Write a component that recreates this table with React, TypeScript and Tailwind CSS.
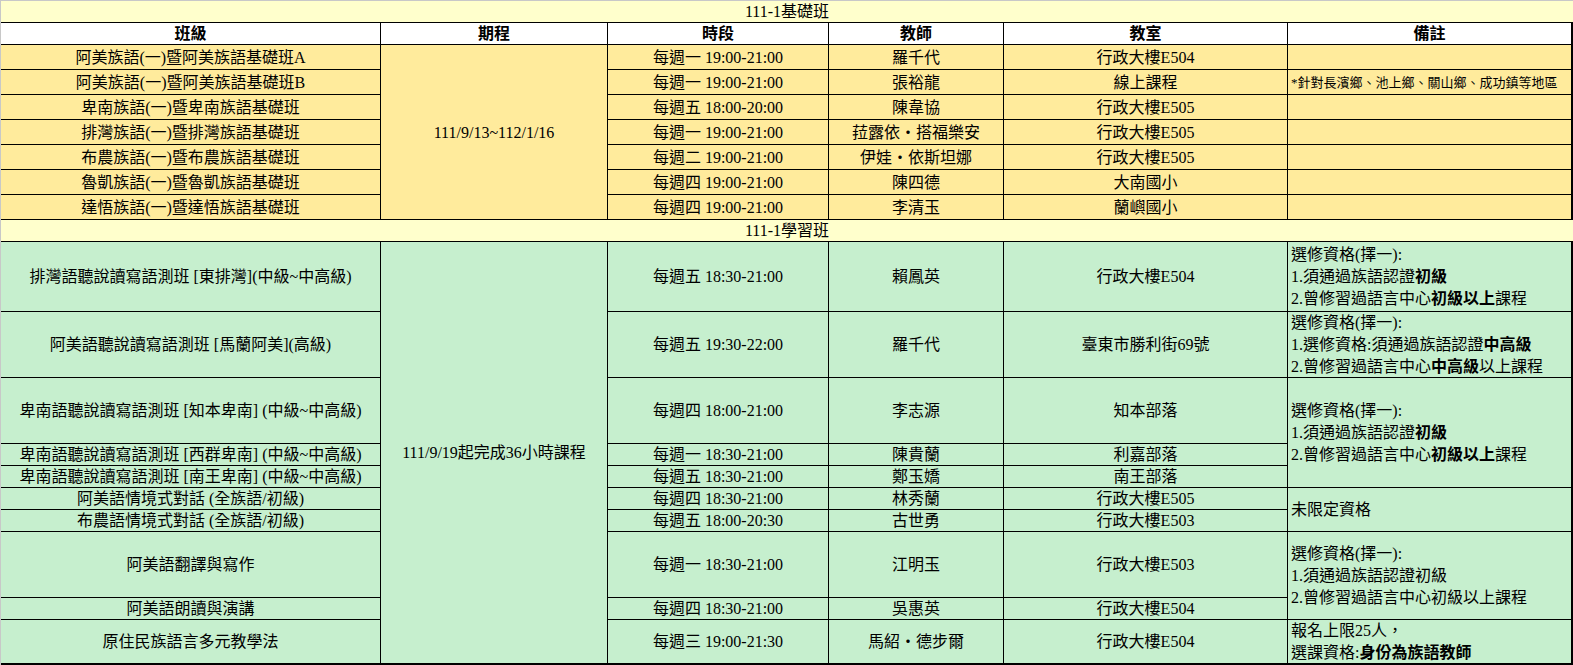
import type { ReactNode } from "react";
import { twMerge } from "tailwind-merge";

// Excel-like fills
const TITLE = "bg-[#ffffcc]";
const YELLOW = "bg-[#ffeb9c]";
const GREEN = "bg-[#c6efce]";

type Note = ReactNode[] | null;

const basicRows = [
  { name: "阿美族語(一)暨阿美族語基礎班A", time: "每週一 19:00-21:00", teacher: "羅千代", room: "行政大樓E504", note: "" },
  { name: "阿美族語(一)暨阿美族語基礎班B", time: "每週一 19:00-21:00", teacher: "張裕龍", room: "線上課程", note: "*針對長濱鄉、池上鄉、關山鄉、成功鎮等地區" },
  { name: "卑南族語(一)暨卑南族語基礎班", time: "每週五 18:00-20:00", teacher: "陳韋協", room: "行政大樓E505", note: "" },
  { name: "排灣族語(一)暨排灣族語基礎班", time: "每週一 19:00-21:00", teacher: "菈露依‧搭福樂安", room: "行政大樓E505", note: "" },
  { name: "布農族語(一)暨布農族語基礎班", time: "每週二 19:00-21:00", teacher: "伊娃‧依斯坦娜", room: "行政大樓E505", note: "" },
  { name: "魯凱族語(一)暨魯凱族語基礎班", time: "每週四 19:00-21:00", teacher: "陳四德", room: "大南國小", note: "" },
  { name: "達悟族語(一)暨達悟族語基礎班", time: "每週四 19:00-21:00", teacher: "李清玉", room: "蘭嶼國小", note: "" },
];

const chooseOne = "選修資格(擇一):";

// span = how many rows the remark cell covers (0 = covered by the one above)
const studyRows: { name: string; time: string; teacher: string; room: string; span: number; note: Note }[] = [
  {
    name: "排灣語聽說讀寫語測班 [東排灣](中級~中高級)", time: "每週五 18:30-21:00", teacher: "賴鳳英", room: "行政大樓E504", span: 1,
    note: [chooseOne, <>1.須通過族語認證<b>初級</b></>, <>2.曾修習過語言中心<b>初級以上</b>課程</>],
  },
  {
    name: "阿美語聽說讀寫語測班 [馬蘭阿美](高級)", time: "每週五 19:30-22:00", teacher: "羅千代", room: "臺東市勝利街69號", span: 1,
    note: [chooseOne, <>1.選修資格:須通過族語認證<b>中高級</b></>, <>2.曾修習過語言中心<b>中高級</b>以上課程</>],
  },
  {
    name: "卑南語聽說讀寫語測班 [知本卑南] (中級~中高級)", time: "每週四 18:00-21:00", teacher: "李志源", room: "知本部落", span: 3,
    note: [chooseOne, <>1.須通過族語認證<b>初級</b></>, <>2.曾修習過語言中心<b>初級以上</b>課程</>],
  },
  { name: "卑南語聽說讀寫語測班 [西群卑南] (中級~中高級)", time: "每週一 18:30-21:00", teacher: "陳貴蘭", room: "利嘉部落", span: 0, note: null },
  { name: "卑南語聽說讀寫語測班 [南王卑南] (中級~中高級)", time: "每週五 18:30-21:00", teacher: "鄭玉嬌", room: "南王部落", span: 0, note: null },
  { name: "阿美語情境式對話 (全族語/初級)", time: "每週四 18:30-21:00", teacher: "林秀蘭", room: "行政大樓E505", span: 2, note: ["未限定資格"] },
  { name: "布農語情境式對話 (全族語/初級)", time: "每週五 18:00-20:30", teacher: "古世勇", room: "行政大樓E503", span: 0, note: null },
  {
    name: "阿美語翻譯與寫作", time: "每週一 18:30-21:00", teacher: "江明玉", room: "行政大樓E503", span: 2,
    note: [chooseOne, "1.須通過族語認證初級", "2.曾修習過語言中心初級以上課程"],
  },
  { name: "阿美語朗讀與演講", time: "每週四 18:30-21:00", teacher: "吳惠英", room: "行政大樓E504", span: 0, note: null },
  {
    name: "原住民族語言多元教學法", time: "每週三 19:00-21:30", teacher: "馬紹‧德步爾", room: "行政大樓E504", span: 1,
    note: ["報名上限25人，", <>選課資格:<b>身份為族語教師</b></>],
  },
];

const spanClass: Record<number, string> = { 1: "", 2: "row-span-2", 3: "row-span-3" };

function Cell({ children, className }: { children?: ReactNode; className?: string }) {
  return (
    <div
      className={twMerge(
        "flex items-center justify-center border-r border-b border-black text-center whitespace-nowrap leading-none pt-px",
        className
      )}
    >
      {children}
    </div>
  );
}

export default function App() {
  const last = studyRows.length - 1;
  return (
    <div className="w-[1573px] h-[665px] overflow-hidden bg-white border-t border-l border-[#c8c8c8] font-['Liberation_Serif','Noto_Sans_CJK_TC',serif] text-[16px] text-black">
      <div className="grid grid-cols-[380px_227px_221px_175px_284px_1fr] grid-rows-[22px_22px_repeat(7,25px)_22px_70px_66px_66px_22px_22px_22px_22px_66px_22px_45px]">
        {/* 基礎班 */}
        <div className={twMerge("col-span-6 flex items-center justify-center border-b border-black", TITLE)}>111-1基礎班</div>
        {["班級", "期程", "時段", "教師", "教室", "備註"].map((h, i) => (
          <Cell key={h} className={twMerge("bg-white font-bold", i === 5 && "border-r-2")}>
            {h}
          </Cell>
        ))}
        {basicRows.map((r, i) => (
          <div key={r.name} className="contents">
            <Cell className={YELLOW}>{r.name}</Cell>
            {i === 0 && <Cell className={twMerge("row-span-7", YELLOW)}>111/9/13~112/1/16</Cell>}
            <Cell className={YELLOW}>{r.time}</Cell>
            <Cell className={YELLOW}>{r.teacher}</Cell>
            <Cell className={YELLOW}>{r.room}</Cell>
            <Cell className={twMerge("justify-start pl-[3px] text-[13px] border-r-2", YELLOW)}>{r.note}</Cell>
          </div>
        ))}

        {/* 學習班 */}
        <div className={twMerge("col-span-6 flex items-center justify-center border-b border-black", TITLE)}>111-1學習班</div>
        {studyRows.map((r, i) => {
          const bottom = i === last ? "border-b-2" : "";
          return (
            <div key={r.name} className="contents">
              <Cell className={twMerge(GREEN, bottom)}>{r.name}</Cell>
              {i === 0 && <Cell className={twMerge("row-span-10 border-b-2", GREEN)}>111/9/19起完成36小時課程</Cell>}
              <Cell className={twMerge(GREEN, bottom)}>{r.time}</Cell>
              <Cell className={twMerge(GREEN, bottom)}>{r.teacher}</Cell>
              <Cell className={twMerge(GREEN, bottom)}>{r.room}</Cell>
              {r.span > 0 && r.note && (
                <div
                  className={twMerge(
                    "flex flex-col justify-center items-start pl-[3px] border-r-2 border-b border-black leading-[22px] whitespace-nowrap",
                    spanClass[r.span],
                    GREEN,
                    bottom
                  )}
                >
                  {r.note.map((line, k) => (
                    <div key={k}>{line}</div>
                  ))}
                </div>
              )}
            </div>
          );
        })}
      </div>
    </div>
  );
}
